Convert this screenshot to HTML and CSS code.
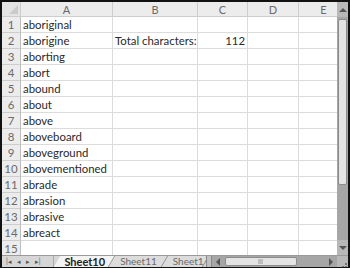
FILE: index.html
```html
<!DOCTYPE html>
<html lang="en">
<head>
    <meta charset="UTF-8">
    <title>Sheet10</title>
    <link rel="stylesheet" href="styles.css">
</head>
<body>
    <div class="window">
        <div class="main">
            <div class="sheet">
                <div class="corner"><span class="cornerMark"></span></div>
                <div class="colHead">A</div>
                <div class="colHead">B</div>
                <div class="colHead">C</div>
                <div class="colHead">D</div>
                <div class="colHead">E</div>

                <div class="rowHead">1</div><div class="cell">aboriginal</div><div class="cell"></div><div class="cell"></div><div class="cell"></div><div class="cell"></div>
                <div class="rowHead">2</div><div class="cell">aborigine</div><div class="cell">Total characters:</div><div class="cell num">112</div><div class="cell"></div><div class="cell"></div>
                <div class="rowHead">3</div><div class="cell">aborting</div><div class="cell"></div><div class="cell"></div><div class="cell"></div><div class="cell"></div>
                <div class="rowHead">4</div><div class="cell">abort</div><div class="cell"></div><div class="cell"></div><div class="cell"></div><div class="cell"></div>
                <div class="rowHead">5</div><div class="cell">abound</div><div class="cell"></div><div class="cell"></div><div class="cell"></div><div class="cell"></div>
                <div class="rowHead">6</div><div class="cell">about</div><div class="cell"></div><div class="cell"></div><div class="cell"></div><div class="cell"></div>
                <div class="rowHead">7</div><div class="cell">above</div><div class="cell"></div><div class="cell"></div><div class="cell"></div><div class="cell"></div>
                <div class="rowHead">8</div><div class="cell">aboveboard</div><div class="cell"></div><div class="cell"></div><div class="cell"></div><div class="cell"></div>
                <div class="rowHead">9</div><div class="cell">aboveground</div><div class="cell"></div><div class="cell"></div><div class="cell"></div><div class="cell"></div>
                <div class="rowHead">10</div><div class="cell">abovementioned</div><div class="cell"></div><div class="cell"></div><div class="cell"></div><div class="cell"></div>
                <div class="rowHead">11</div><div class="cell">abrade</div><div class="cell"></div><div class="cell"></div><div class="cell"></div><div class="cell"></div>
                <div class="rowHead">12</div><div class="cell">abrasion</div><div class="cell"></div><div class="cell"></div><div class="cell"></div><div class="cell"></div>
                <div class="rowHead">13</div><div class="cell">abrasive</div><div class="cell"></div><div class="cell"></div><div class="cell"></div><div class="cell"></div>
                <div class="rowHead">14</div><div class="cell">abreact</div><div class="cell"></div><div class="cell"></div><div class="cell"></div><div class="cell"></div>
                <div class="rowHead">15</div><div class="cell"></div><div class="cell"></div><div class="cell"></div><div class="cell"></div><div class="cell"></div>
            </div>
            <div class="vscroll">
                <div class="vBtn"><span class="triUp"></span></div>
                <div class="vThumb"></div>
                <div class="vTrack"></div>
                <div class="vBtn"><span class="triDown"></span></div>
            </div>
        </div>
        <div class="bottomBar">
            <div class="tabNav">
                <span class="navGlyph">|&#9666;</span>
                <span class="navGlyph">&#9666;</span>
                <span class="navGlyph">&#9656;</span>
                <span class="navGlyph">&#9656;|</span>
            </div>
            <div class="tabs">
                <div class="tab active"><span>Sheet10</span></div>
                <div class="tab"><span>Sheet11</span></div>
                <div class="tab last"><span>Sheet1</span></div>
            </div>
            <div class="splitBox"></div>
            <div class="hscroll">
                <div class="hBtn"><span class="triLeft"></span></div>
                <div class="hThumb"><span class="grip"></span></div>
                <div class="hTrack"></div>
                <div class="hBtn"><span class="triRight"></span></div>
            </div>
            <div class="sizeGrip">
                <svg width="11" height="11" viewBox="0 0 11 11">
                    <rect x="8" y="2" width="2" height="2" fill="#777"/>
                    <rect x="5" y="5" width="2" height="2" fill="#777"/>
                    <rect x="8" y="5" width="2" height="2" fill="#777"/>
                    <rect x="2" y="8" width="2" height="2" fill="#777"/>
                    <rect x="5" y="8" width="2" height="2" fill="#777"/>
                    <rect x="8" y="8" width="2" height="2" fill="#777"/>
                </svg>
            </div>
        </div>
    </div>
</body>
</html>
```

FILE: styles.css
```css
body {
    margin: 0;
    padding: 0;
    background-color: #000;
    font-family: Lato, "Open Sans", sans-serif;
}
.window {
    width: 350px;
    height: 268px;
    box-sizing: border-box;
    border-style: solid;
    border-color: #111;
    border-width: 2px 2px 1px 2px;
    background-color: #fff;
    display: flex;
    flex-direction: column;
    overflow: hidden;
}
.main {
    display: flex;
    height: 253px;
    flex-shrink: 0;
    overflow: hidden;
}
.sheet {
    width: 335px;
    overflow: hidden;
    display: grid;
    grid-template-columns: 19px 92px 85px 50px 51px 50px;
    grid-template-rows: 15px repeat(15, 16px);
}
.corner,
.colHead,
.rowHead {
    background-color: #ececec;
    color: #6a6a6a;
    font-size: 11px;
    box-sizing: border-box;
    border-right: 1px solid #cdcdcd;
    border-bottom: 1px solid #cdcdcd;
    display: flex;
    align-items: center;
    justify-content: center;
}
.corner {
    position: relative;
    background-color: #e4e4e4;
}
.cornerMark {
    position: absolute;
    right: 2px;
    bottom: 2px;
    width: 0;
    height: 0;
    border-left: 9px solid transparent;
    border-bottom: 9px solid #cbcbcb;
}
.rowHead {
    font-size: 11.5px;
    border-right-color: #bdbdbd;
}
.cell {
    box-sizing: border-box;
    border-right: 1px solid #dcdcdc;
    border-bottom: 1px solid #dcdcdc;
    font-size: 11.4px;
    color: #2a2a2a;
    padding: 0 2px;
    line-height: 15px;
    white-space: nowrap;
}
.num {
    text-align: right;
}
.vscroll {
    width: 11px;
    display: flex;
    flex-direction: column;
    background-color: #a6a6a6;
}
.vBtn {
    height: 15px;
    display: flex;
    align-items: center;
    justify-content: center;
    background-color: #b8b8b8;
}
.vThumb {
    margin: 2px 1px 0 1px;
    height: 164px;
    background-color: #e4e4e4;
    border: 1px solid #8c8c8c;
    border-radius: 2px;
}
.vTrack {
    flex: 1;
}
.triUp {
    width: 0;
    height: 0;
    border-left: 4px solid transparent;
    border-right: 4px solid transparent;
    border-bottom: 4px solid #555;
}
.triDown {
    width: 0;
    height: 0;
    border-left: 4px solid transparent;
    border-right: 4px solid transparent;
    border-top: 4px solid #555;
}
.bottomBar {
    height: 12px;
    flex-shrink: 0;
    box-sizing: border-box;
    display: flex;
    background-color: #d6d6d6;
    border-top: 1px solid #9a9a9a;
}
.tabNav {
    width: 53px;
    display: flex;
    align-items: center;
    gap: 5px;
    padding-left: 4px;
    box-sizing: border-box;
    color: #555;
    font-size: 7px;
    line-height: 11px;
    border-right: 1px solid #aaa;
}
.tabs {
    width: 150px;
    display: flex;
    overflow-x: clip;
    padding-left: 3px;
}
.tab {
    position: relative;
    padding: 0 8px 0 8px;
    color: #6a6a6a;
    font-size: 10px;
    line-height: 11px;
    white-space: nowrap;
}
.tab::before {
    content: "";
    position: absolute;
    top: 0;
    bottom: 0;
    left: 0;
    right: 0;
    background-color: #dcdcdc;
    border-right: 1px solid #8a8a8a;
    transform: skewX(-30deg);
}
.tab span {
    position: relative;
}
.tab.active {
    color: #222;
    font-weight: bold;
    font-size: 11px;
    padding: 0 7px 0 7px;
}
.tab.active::before {
    background-color: #f4f4f4;
}
.tab.last {
    padding-right: 2px;
}
.splitBox {
    width: 4px;
    background-color: #c0c0c0;
    border-left: 1px solid #888;
    border-right: 1px solid #888;
}
.hscroll {
    width: 127px;
    display: flex;
    background-color: #a6a6a6;
}
.hBtn {
    width: 12px;
    display: flex;
    align-items: center;
    justify-content: center;
}
.hThumb {
    width: 70px;
    margin: 1px 0 1px 1px;
    background-color: #e4e4e4;
    border: 1px solid #8c8c8c;
    border-radius: 2px;
    display: flex;
    align-items: center;
    justify-content: center;
}
.grip {
    width: 5px;
    height: 5px;
    background-color: #bdbdbd;
}
.hTrack {
    flex: 1;
}
.triLeft {
    width: 0;
    height: 0;
    border-top: 4px solid transparent;
    border-bottom: 4px solid transparent;
    border-right: 4px solid #555;
}
.triRight {
    width: 0;
    height: 0;
    border-top: 4px solid transparent;
    border-bottom: 4px solid transparent;
    border-left: 4px solid #555;
}
.sizeGrip {
    flex: 1;
    background-color: #b8b8b8;
}
```
